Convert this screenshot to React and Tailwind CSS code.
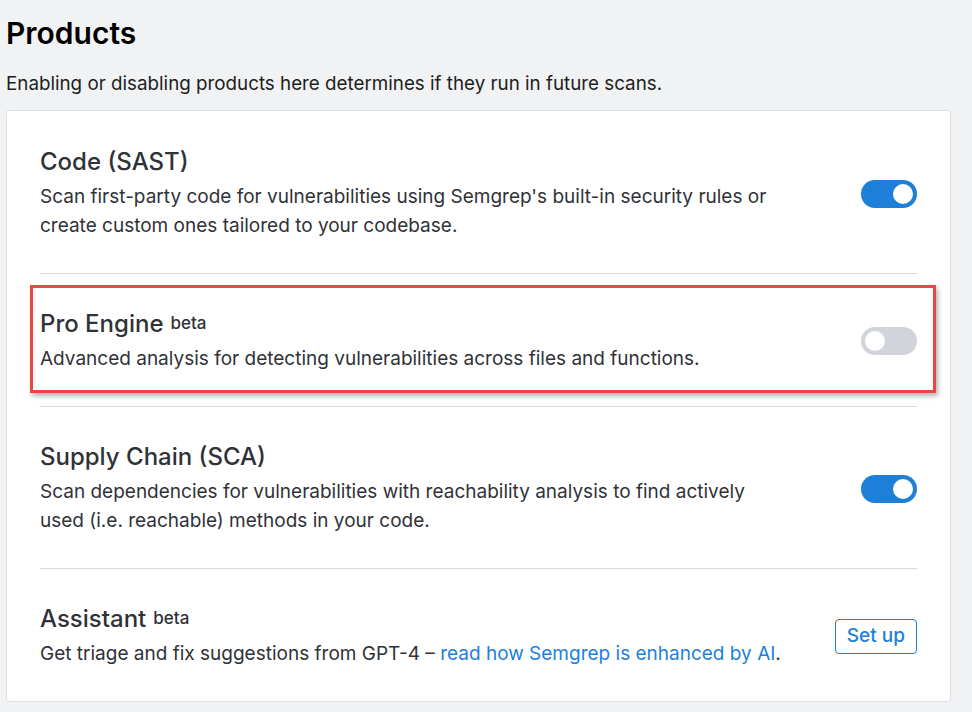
import { useState } from 'react';

const FONT = { fontFamily: 'Inter, "Noto Sans", sans-serif' };

function Toggle({ on }) {
  return (
    <button
      className={
        'relative h-[28px] w-[56px] shrink-0 rounded-full ' +
        (on ? 'bg-[#1e7fd9]' : 'bg-[#d1d5db]')
      }
    >
      <span
        className={
          'absolute top-[4px] h-[20px] w-[20px] rounded-full bg-white ' +
          (on ? 'right-[4px]' : 'left-[4px]')
        }
      />
    </button>
  );
}

function Beta() {
  return <sup className="ml-[7px] text-[17px] font-medium relative top-[-3px]">beta</sup>;
}

function Row({ title, beta, children, action, highlight, first, last }) {
  return (
    <div
      className={
        'relative flex items-center justify-between pb-[33px] ' +
        (first ? 'pt-[36px] ' : 'pt-[35px] ') +
        (last ? '' : 'border-b border-[#d6d9dd]')
      }
    >
      {highlight && (
        <div className="pointer-events-none absolute left-[-10px] right-[-19px] top-[11px] bottom-[13px] border-[3px] border-[#ef4444] shadow-[2px_3px_5px_rgba(0,0,0,0.3)]" />
      )}
      <div className="max-w-[748px]">
        <h2 className="text-[24px] leading-[30px] font-medium text-[#2f3237]">
          {title}
          {beta && <Beta />}
        </h2>
        <p className="mt-[5px] text-[19px] leading-[29px] text-[#2f3237]">{children}</p>
      </div>
      {action}
    </div>
  );
}

export default function App() {
  const [products] = useState({ code: true, pro: false, sca: true });

  return (
    <div className="min-h-[712px] bg-[#f1f2f4] px-[6px] pt-[14px]" style={FONT}>
      <h1 className="text-[30px] leading-[38px] font-semibold text-black">Products</h1>
      <p className="mt-[19px] text-[18.8px] leading-[26px] text-[#1c1e21]">
        Enabling or disabling products here determines if they run in future scans.
      </p>
      <div className="mt-[13px] w-[945px] rounded-[3px] border border-[#dcdfe3] bg-white px-[33px]">
        <Row title="Code (SAST)" first action={<Toggle on={products.code} />}>
          Scan first-party code for vulnerabilities using Semgrep's built-in security rules or create custom ones tailored to your codebase.
        </Row>
        <Row title="Pro Engine" beta highlight action={<Toggle on={products.pro} />}>
          Advanced analysis for detecting vulnerabilities across files and functions.
        </Row>
        <Row title="Supply Chain (SCA)" action={<Toggle on={products.sca} />}>
          Scan dependencies for vulnerabilities with reachability analysis to find actively used (i.e. reachable) methods in your code.
        </Row>
        <Row
          title="Assistant"
          beta
          last
          action={
            <button className="shrink-0 rounded-[4px] border border-[#1e7fd9] px-[11px] h-[35px] text-[19px] font-medium text-[#1e7fd9]">
              Set up
            </button>
          }
        >
          Get triage and fix suggestions from GPT-4 –{' '}
          <a className="text-[#1e7fd9]" href="#">read how Semgrep is enhanced by AI</a>.
        </Row>
      </div>
    </div>
  );
}
